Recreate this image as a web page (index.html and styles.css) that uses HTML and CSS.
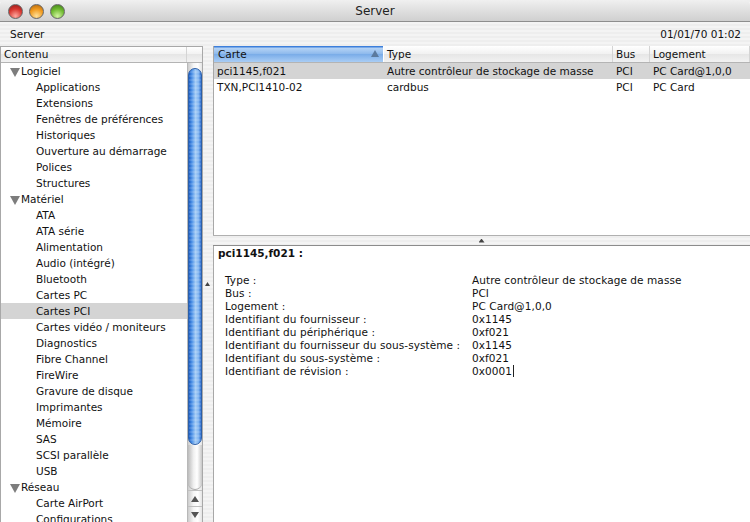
FILE: index.html
```html
<!DOCTYPE html>
<html lang="fr">
<head>
    <meta charset="UTF-8" />
    <title>Server</title>
    <link rel="stylesheet" href="styles.css">
</head>
<body>
    <div class="window">
        <div class="titlebar">
            <div class="lights">
                <span class="light red"></span>
                <span class="light orange"></span>
                <span class="light green"></span>
            </div>
            <div class="title">Server</div>
        </div>
        <div class="infobar">
            <span>Server</span>
            <span>01/01/70 01:02</span>
        </div>
        <div class="main">
            <div class="side">
                <div class="side-head">
                    <div class="side-head-label">Contenu</div>
                    <div class="side-head-corner"></div>
                </div>
                <div class="side-body">
                    <ul class="tree">
                        <li class="group"><span class="tri"></span>Logiciel</li>
                        <li>Applications</li>
                        <li>Extensions</li>
                        <li>Fenêtres de préférences</li>
                        <li>Historiques</li>
                        <li>Ouverture au démarrage</li>
                        <li>Polices</li>
                        <li>Structures</li>
                        <li class="group"><span class="tri"></span>Matériel</li>
                        <li>ATA</li>
                        <li>ATA série</li>
                        <li>Alimentation</li>
                        <li>Audio (intégré)</li>
                        <li>Bluetooth</li>
                        <li>Cartes PC</li>
                        <li class="current">Cartes PCI</li>
                        <li>Cartes vidéo / moniteurs</li>
                        <li>Diagnostics</li>
                        <li>Fibre Channel</li>
                        <li>FireWire</li>
                        <li>Gravure de disque</li>
                        <li>Imprimantes</li>
                        <li>Mémoire</li>
                        <li>SAS</li>
                        <li>SCSI parallèle</li>
                        <li>USB</li>
                        <li class="group"><span class="tri"></span>Réseau</li>
                        <li>Carte AirPort</li>
                        <li>Configurations</li>
                    </ul>
                    <div class="scroll">
                        <div class="scroll-cap"></div>
                        <div class="scroll-thumb"></div>
                        <div class="scroll-rest"></div>
                        <div class="scroll-btn"><span class="arrow-up"></span></div>
                        <div class="scroll-btn"><span class="arrow-down"></span></div>
                    </div>
                </div>
            </div>
            <div class="vsplit"><span class="grip-left"></span></div>
            <div class="right">
                <div class="table">
                    <div class="thead">
                        <div class="th col-card sorted">Carte<span class="sort-arrow"></span></div>
                        <div class="th col-type">Type</div>
                        <div class="th col-bus">Bus</div>
                        <div class="th col-slot">Logement</div>
                    </div>
                    <div class="tr selected">
                        <div class="td col-card">pci1145,f021</div>
                        <div class="td col-type">Autre contrôleur de stockage de masse</div>
                        <div class="td col-bus">PCI</div>
                        <div class="td col-slot">PC Card@1,0,0</div>
                    </div>
                    <div class="tr">
                        <div class="td col-card">TXN,PCI1410-02</div>
                        <div class="td col-type">cardbus</div>
                        <div class="td col-bus">PCI</div>
                        <div class="td col-slot">PC Card</div>
                    </div>
                </div>
                <div class="hsplit"><span class="grip-up"></span></div>
                <div class="detail">
                    <div class="detail-title">pci1145,f021 :</div>
                    <dl class="props">
                        <dt>Type :</dt><dd>Autre contrôleur de stockage de masse</dd>
                        <dt>Bus :</dt><dd>PCI</dd>
                        <dt>Logement :</dt><dd>PC Card@1,0,0</dd>
                        <dt>Identifiant du fournisseur :</dt><dd>0x1145</dd>
                        <dt>Identifiant du périphérique :</dt><dd>0xf021</dd>
                        <dt>Identifiant du fournisseur du sous-système :</dt><dd>0x1145</dd>
                        <dt>Identifiant du sous-système :</dt><dd>0xf021</dd>
                        <dt>Identifiant de révision :</dt><dd><span class="caret">0x0001</span></dd>
                    </dl>
                </div>
            </div>
        </div>
    </div>
</body>
</html>
```

FILE: styles.css
```css
* {
    margin: 0;
    padding: 0;
    box-sizing: border-box;
}
ul {
    list-style: none;
}
html,
body {
    height: 100%;
    overflow: hidden;
}
body {
    font-family: "DejaVu Sans", "Liberation Sans", sans-serif;
    font-size: 10.5px;
    color: #111;
    background-color: #fff;
}
.window {
    width: 750px;
    height: 522px;
    display: flex;
    flex-direction: column;
    background: repeating-linear-gradient(#eee 0, #eee 2px, #f4f4f4 2px, #f4f4f4 4px);
}

/* title bar */
.titlebar {
    height: 22px;
    flex: none;
    display: flex;
    align-items: center;
    position: relative;
    background: linear-gradient(#f0f0f0, #dcdcdc 60%, #d0d0d0);
    border-bottom: 1px solid #8e8e8e;
    border-radius: 5px 5px 0 0;
}
.lights {
    display: flex;
    gap: 6px;
    padding-left: 8px;
    padding-top: 1px;
}
.light {
    width: 15px;
    height: 15px;
    border-radius: 50%;
    border: 1px solid #666;
}
.light.red {
    background: radial-gradient(circle at 50% 85%, #ffa9a0, #d8362f 55%, #8e1a18);
}
.light.orange {
    background: radial-gradient(circle at 50% 85%, #ffe19a, #f0991d 55%, #a9610f);
}
.light.green {
    background: radial-gradient(circle at 50% 85%, #d2f5a0, #6eb92f 55%, #3c7a16);
}
.title {
    position: absolute;
    left: 0;
    right: 0;
    top: 4px;
    text-align: center;
    font-size: 12px;
    line-height: 15px;
    color: #222;
}
.infobar {
    height: 24px;
    flex: none;
    display: flex;
    justify-content: space-between;
    align-items: center;
    padding: 0 9px 0 10px;
}

/* left column */
.main {
    flex: 1;
    display: flex;
    min-height: 0;
}
.side {
    width: 203px;
    flex: none;
    display: flex;
    flex-direction: column;
    border: 1px solid #a8a8a8;
    border-bottom: 0;
    background-color: #fff;
}
.side-head {
    height: 16px;
    flex: none;
    display: flex;
    background: linear-gradient(#fff, #f1f1f1 50%, #e6e6e6 50%, #f2f2f2);
    border-bottom: 1px solid #b4b4b4;
}
.side-head-label {
    flex: 1;
    padding-left: 3px;
    line-height: 15px;
    border-right: 1px solid #d4d4d4;
}
.side-head-corner {
    width: 15px;
}
.side-body {
    flex: 1;
    display: flex;
    min-height: 0;
}
.tree {
    flex: 1;
    overflow: hidden;
}
.tree li {
    height: 16px;
    line-height: 16px;
    padding-left: 35px;
    white-space: nowrap;
}
.tree li.group {
    padding-left: 7px;
    display: flex;
    align-items: center;
}
.tree li.current {
    background-color: #d4d4d4;
}
.tri {
    width: 0;
    height: 0;
    margin: 2px 1px 0 2px;
    border-left: 5.5px solid transparent;
    border-right: 5.5px solid transparent;
    border-top: 9px solid #7d7d7d;
}
.scroll {
    width: 15px;
    flex: none;
    display: flex;
    flex-direction: column;
    border-left: 1px solid #b8b8b8;
    background: linear-gradient(90deg, #ccc, #f6f6f6 40%, #fff 70%, #e4e4e4);
}
.scroll-cap {
    height: 5px;
    flex: none;
}
.scroll-thumb {
    height: 377px;
    flex: none;
    border-radius: 7px;
    background: repeating-linear-gradient(#0000 0, #0000 2px, rgba(255,255,255,.12) 2px, rgba(255,255,255,.12) 4px), linear-gradient(90deg, #1c5fc4, #4f93e8 25%, #a6cdf6 55%, #7fb3f0 80%, #2e6fd0);
    border: 1px solid #2c5fa8;
}
.scroll-rest {
    flex: 1;
    border-radius: 0 0 7px 7px;
    background: linear-gradient(90deg, #bbb, #f0f0f0 40%, #fff 65%, #c8c8c8);
    border-bottom: 1px solid #aaa;
}
.scroll-btn {
    height: 16px;
    flex: none;
    display: flex;
    align-items: center;
    justify-content: center;
    border-top: 1px solid #c0c0c0;
}
.arrow-up {
    border-left: 4px solid transparent;
    border-right: 4px solid transparent;
    border-bottom: 6px solid #555;
}
.arrow-down {
    border-left: 4px solid transparent;
    border-right: 4px solid transparent;
    border-top: 6px solid #555;
}

/* splitters */
.vsplit {
    width: 10px;
    flex: none;
    display: flex;
    align-items: center;
    justify-content: center;
    padding-right: 1px;
}
.grip-left {
    width: 5px;
    height: 4px;
    background-color: #444;
    clip-path: polygon(50% 0, 100% 100%, 0 100%);
}
.right {
    flex: 1;
    min-width: 0;
    display: flex;
    flex-direction: column;
}
.hsplit {
    height: 11px;
    flex: none;
    display: flex;
    align-items: center;
    justify-content: center;
    border-top: 1px solid #b0b0b0;
    border-bottom: 1px solid #8c8c8c;
}
.grip-up {
    width: 6px;
    height: 4px;
    background-color: #444;
    clip-path: polygon(50% 0, 100% 100%, 0 100%);
}

/* table */
.table {
    height: 189px;
    flex: none;
    background-color: #fff;
    border-left: 1px solid #a8a8a8;
}
.thead {
    display: flex;
    height: 17px;
    background: linear-gradient(#fff, #f1f1f1 50%, #e6e6e6 50%, #f2f2f2);
    border-bottom: 1px solid #b4b4b4;
}
.th {
    line-height: 16px;
    padding-left: 3px;
    border-right: 1px solid #d4d4d4;
}
.th.sorted {
    position: relative;
    padding-left: 4px;
    background: linear-gradient(#3d7fdb 0, #3d7fdb 1px, #b5d3f5 2px, #8db9ec 50%, #78abe8 50%, #a9cdf5);
    border-right: 1px solid #fff;
}
.sort-arrow {
    position: absolute;
    right: 4px;
    top: 4px;
    border-left: 4px solid transparent;
    border-right: 4px solid transparent;
    border-bottom: 7px solid #5b7a9e;
}
.col-card {
    width: 170px;
    flex: none;
}
.col-type {
    width: 229px;
    flex: none;
}
.col-bus {
    width: 37px;
    flex: none;
}
.col-slot {
    flex: 1;
}
.tr {
    display: flex;
    height: 16px;
    line-height: 16px;
}
.tr.selected {
    background-color: #d4d4d4;
}
.td {
    padding-left: 3px;
    white-space: nowrap;
}

/* detail pane */
.detail {
    flex: 1;
    background-color: #fff;
    border-left: 1px solid #a8a8a8;
    padding-left: 4px;
}
.detail-title {
    font-weight: bold;
    line-height: 14px;
    margin-bottom: 14px;
}
.props {
    display: grid;
    grid-template-columns: 247px 1fr;
    line-height: 13px;
    padding-left: 7px;
    letter-spacing: .08px;
}
.caret {
    border-right: 1px solid #222;
    padding-right: 1px;
}
```
